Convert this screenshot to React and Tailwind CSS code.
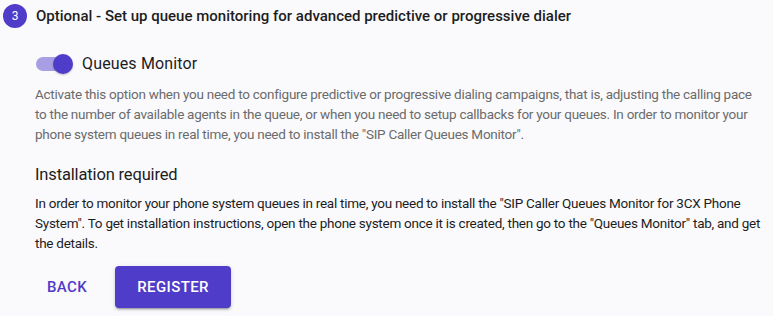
import React, { useState } from 'react';

export default function App() {
  const [enabled, setEnabled] = useState(true);

  return (
    <div className="w-[773px] h-[316px] bg-[#fafafd] font-['Roboto',sans-serif] text-[rgba(0,0,0,0.87)] overflow-hidden">
      <div className="flex items-center pl-[3px] pt-[4px]">
        <div className="w-6 h-6 rounded-full bg-[#4f3cc8] text-white text-[12px] flex items-center justify-center">3</div>
        <div className="ml-[9px] text-[15px] font-medium text-[#1d1d1d] leading-6">
          Optional - Set up queue monitoring for advanced predictive or progressive dialer
        </div>
      </div>

      <div className="pl-[35px]">
        {/* Switch row */}
        <div className="flex items-center mt-[26px] h-[20px]">
          <button
            onClick={() => setEnabled(!enabled)}
            className="relative w-[38px] h-[20px] flex items-center"
          >
            <span className={`absolute left-[1px] w-[34px] h-[14px] rounded-full ${enabled ? 'bg-[#a89ee3]' : 'bg-gray-400'}`} />
            <span className={`absolute top-0 w-[20px] h-[20px] rounded-full shadow-[0_1px_2px_rgba(0,0,0,0.25)] ${enabled ? 'left-[18px] bg-[#4f3cc8]' : 'left-0 bg-white'}`} />
          </button>
          <span className="ml-[9px] text-[16px] text-[#1d1d1d] tracking-[0.15px]">Queues Monitor</span>
        </div>

        <p className="mt-[10px] text-[13.5px] leading-[20px] text-[#6b6b6b] tracking-[-0.26px] whitespace-nowrap">
          Activate this option when you need to configure predictive or progressive dialing campaigns, that is, adjusting the calling pace<br />
          to the number of available agents in the queue, or when you need to setup callbacks for your queues. In order to monitor your<br />
          phone system queues in real time, you need to install the "SIP Caller Queues Monitor".
        </p>

        <h3 className="mt-[19px] text-[16.5px] leading-[24px] text-[#1d1d1d] tracking-[-0.15px]">Installation required</h3>

        <p className="mt-[6px] text-[13.5px] leading-[20px] text-[#1d1d1d] tracking-[-0.26px] whitespace-nowrap">
          In order to monitor your phone system queues in real time, you need to install the "SIP Caller Queues Monitor for 3CX Phone<br />
          System". To get installation instructions, open the phone system once it is created, then go to the "Queues Monitor" tab, and get<br />
          the details.
        </p>

        <div className="flex items-center mt-[13px] ml-[1px]">
          <button className="h-[42px] px-[11px] text-[15px] font-medium uppercase text-[#4f3cc8] rounded tracking-[0.4px]">
            Back
          </button>
          <button className="ml-[17px] h-[42px] px-[22px] text-[15px] font-medium uppercase text-white bg-[#4f3cc8] rounded tracking-[0.4px] shadow-[0_3px_1px_-2px_rgba(0,0,0,0.2),0_2px_2px_0_rgba(0,0,0,0.14),0_1px_5px_0_rgba(0,0,0,0.12)]">
            Register
          </button>
        </div>
      </div>
    </div>
  );
}
